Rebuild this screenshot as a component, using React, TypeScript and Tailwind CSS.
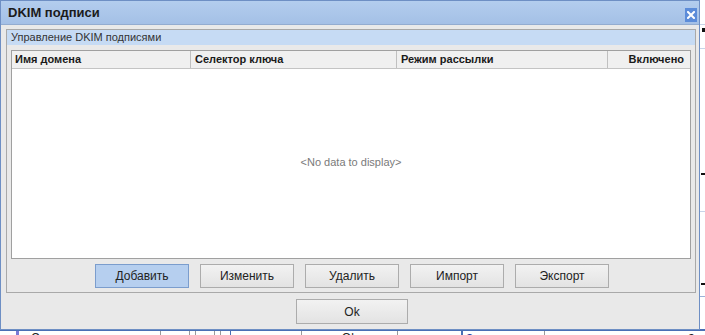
import React from "react";

const btn =
  "h-[24px] w-[94px] border border-[#acacac] bg-gradient-to-b from-[#f2f2f2] to-[#e3e3e3] text-[12px] text-[#222] flex items-center justify-center";

const cell = "h-full border-r border-[#9a9a9a] shrink-0";

export default function App() {
  return (
    <div className="relative w-[705px] h-[335px] overflow-hidden bg-white font-['Liberation_Sans',Arial,sans-serif]">
      {/* background application (behind the dialog) */}
      <div className="w-[705px] h-[335px] flex flex-col">
        <div className="h-[329px] flex justify-end">
          <div className="w-[6px] h-full flex flex-col">
            <div className="h-[25px] border-b border-[#c8d4e8]" />
            <div className="h-[4px] mt-[3px] ml-[3px] bg-[#111]" />
            <div className="h-[17px] border-b border-[#c8d4e8]" />
            <div className="h-[2px] mt-[124px] ml-[2px] bg-[#111]" />
            <div className="h-[37px] border-b border-[#c8d4e8]" />
            <div className="h-[2px] mt-[71px] ml-[2px] bg-[#111]" />
            <div className="h-[12px] border-b border-[#9bb2d8]" />
          </div>
        </div>
        <div className="h-[6px] border-t-2 border-[#4a6fb5] flex text-[12px] leading-none text-[#222]">
          <div className="w-[16px] shrink-0" />
          <div className="w-[3px] h-full bg-[#7b7bd6] shrink-0" />
          <div className={`${cell} w-[142px] pl-[12px] pt-[1px]`}>С</div>
          <div className={`${cell} w-[29px]`} />
          <div className={`${cell} w-[6px]`} />
          <div className={`${cell} w-[19px]`} />
          <div className={`${cell} w-[6px]`} />
          <div className="h-full w-[10px] border-r border-[#4a6fb5] shrink-0" />
          <div className={`${cell} w-[71px]`} />
          <div className={`${cell} w-[96px] flex justify-center pt-[1px]`}>Ok</div>
          <div className="h-full w-[65px] border-r-2 border-[#4a6fb5] shrink-0" />
          <div className={`${cell} w-[82px] pl-[3px] pt-[1px] text-[13px] font-bold text-[#2a3fa0]`}>2</div>
          <div className="flex-1 flex justify-between pl-[6px] pr-[10px] pt-[1px] text-[13px] font-bold">
            <span>плохих адресов:</span>
            <span>0</span>
          </div>
        </div>
      </div>

      {/* dialog window */}
      <div className="absolute left-0 top-0 w-[700px] h-[330px] border border-[#6e8fc4] bg-[#e9e9e9] flex flex-col">
        {/* title bar */}
        <div className="h-[24px] shrink-0 flex items-center justify-between pl-[7px] pr-[2px] bg-gradient-to-b from-[#b3cdee] to-[#a4c0e6] border-b border-[#93acd0]">
          <span className="text-[13px] font-bold text-[#1b1b1b]">DKIM подписи</span>
          <div className="w-[12px] h-[14px] mt-[4px] bg-[#5c8cd9] flex items-center justify-center">
            <svg width="8" height="8" viewBox="0 0 8 8">
              <path d="M1 1 L7 7 M7 1 L1 7" stroke="white" strokeWidth="2" strokeLinecap="square" />
            </svg>
          </div>
        </div>

        {/* group box */}
        <div className="ml-[5px] mt-[4px] w-[690px] h-[264px] border border-[#a9a9a9] flex flex-col">
          <div className="h-[15px] shrink-0 bg-[#c6dbf4] pl-[4px] flex items-center text-[11px] text-[#333]">
            Управление DKIM подписями
          </div>
          <div className="ml-[4px] mt-[5px] w-[680px] h-[209px] border border-[#a0a0a0] bg-white flex flex-col">
            <div className="h-[18px] shrink-0 flex bg-[#f0f0f0] border-b border-[#c4c4c4] text-[11px] font-bold text-[#1a1a1a]">
              <div className="w-[179px] pl-[3px] flex items-center border-r border-[#c0c0c0]">Имя домена</div>
              <div className="w-[206px] pl-[4px] flex items-center border-r border-[#c0c0c0]">Селектор ключа</div>
              <div className="w-[211px] pl-[4px] flex items-center border-r border-[#c0c0c0]">Режим рассылки</div>
              <div className="flex-1 pr-[6px] flex items-center justify-end">Включено</div>
            </div>
            <div className="flex-1 flex items-center justify-center pb-[2px] text-[11px] text-[#7a7a7a]">
              &lt;No data to display&gt;
            </div>
          </div>
          <div className="mt-[5px] pl-[88px] flex gap-[11px]">
            <div className="h-[24px] w-[94px] border border-[#7b9dcd] bg-[#b6cfef] text-[12px] text-[#222] flex items-center justify-center">
              Добавить
            </div>
            <div className={btn}>Изменить</div>
            <div className={btn}>Удалить</div>
            <div className={btn}>Импорт</div>
            <div className={btn}>Экспорт</div>
          </div>
        </div>

        {/* Ok */}
        <div className="mt-[6px] pl-[295px] flex">
          <div className="h-[25px] w-[112px] border border-[#acacac] bg-gradient-to-b from-[#f2f2f2] to-[#e3e3e3] text-[12px] text-[#222] flex items-center justify-center">
            Ok
          </div>
        </div>
      </div>
    </div>
  );
}
